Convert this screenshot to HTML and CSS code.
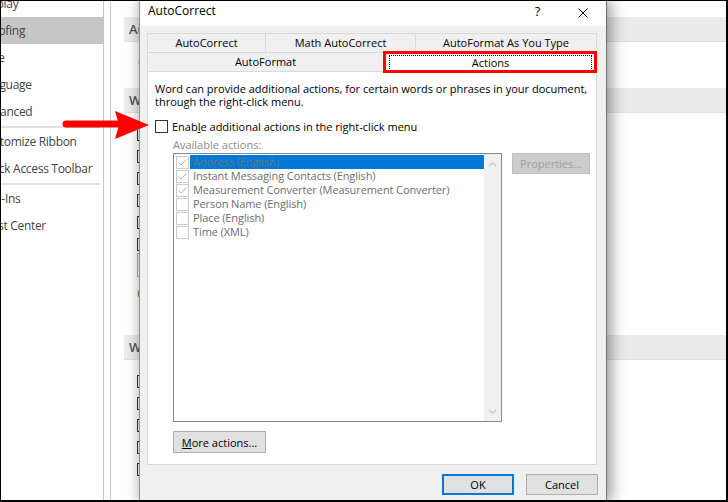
FILE: index.html
```html
<!DOCTYPE html>
<html lang="en">
<head>
<meta charset="utf-8">
<title>AutoCorrect - Actions</title>
<link rel="stylesheet" href="styles.css">
</head>
<body>
<div class="screen">
  <div class="options">
    <nav class="nav">
      <div class="nav-item first">Display</div>
      <div class="nav-item selected">Proofing</div>
      <div class="nav-item">Save</div>
      <div class="nav-item">Language</div>
      <div class="nav-item">Advanced</div>
      <div class="nav-sep"></div>
      <div class="nav-item">Customize Ribbon</div>
      <div class="nav-item">Quick Access Toolbar</div>
      <div class="nav-sep"></div>
      <div class="nav-item">Add-Ins</div>
      <div class="nav-item">Trust Center</div>
    </nav>
    <div class="gutter"></div>
    <main class="content">
      <div class="sec-head">AutoCorrect options</div>
      <div class="sec-text">Change how Word corrects and formats text as you type:</div>
      <div class="sec-head">When correcting spelling in Microsoft Office programs</div>
      <div class="bg-checks">
        <div class="bg-check"></div>
        <div class="bg-check"></div>
        <div class="bg-check"></div>
        <div class="bg-check"></div>
        <div class="bg-check"></div>
        <div class="bg-check"></div>
      </div>
      <div class="bg-select"></div>
      <div class="sec-link">Custom Dictionaries...</div>
      <div class="sec-head third">When correcting spelling and grammar in Word</div>
      <div class="bg-checks">
        <div class="bg-check"></div>
        <div class="bg-check"></div>
        <div class="bg-check"></div>
        <div class="bg-check"></div>
        <div class="bg-check"></div>
      </div>
    </main>
  </div>

  <section class="dialog">
    <header class="titlebar">
      <span class="title">AutoCorrect</span>
      <span class="cap-btn help">?</span>
      <span class="cap-btn close">
        <svg width="10" height="10" viewBox="0 0 10 10"><path d="M0.5 0.5 L9.5 9.5 M9.5 0.5 L0.5 9.5" stroke="#000" stroke-width="1" fill="none"/></svg>
      </span>
    </header>
    <div class="dlg-body">
      <div class="tabrow row1">
        <div class="tab">AutoCorrect</div>
        <div class="tab">Math AutoCorrect</div>
        <div class="tab">AutoFormat As You Type</div>
      </div>
      <div class="tabrow row2">
        <div class="tab">AutoFormat</div>
        <div class="tab active"><span class="focus">Actions</span><span class="redbox"></span></div>
      </div>
      <div class="panel">
        <p class="desc">Word can provide additional actions, for certain words or phrases in your document,<br>through the right-click menu.</p>
        <label class="enable"><span class="cb"></span><span class="enable-text">Enab<u>l</u>e additional actions in the right-click menu</span></label>
        <div class="avail">Available actions:</div>
        <div class="list-row">
          <div class="listbox">
            <div class="items">
              <div class="item"><span class="lcb checked"><svg width="11" height="11" viewBox="0 0 11 11"><path d="M1.5 5.5 L4 8 L9.5 2.5" stroke="#b0b0b0" stroke-width="1" fill="none"/></svg></span><span class="ltext sel">Address (English)</span></div>
              <div class="item"><span class="lcb checked"><svg width="11" height="11" viewBox="0 0 11 11"><path d="M1.5 5.5 L4 8 L9.5 2.5" stroke="#b0b0b0" stroke-width="1" fill="none"/></svg></span><span class="ltext">Instant Messaging Contacts (English)</span></div>
              <div class="item"><span class="lcb checked"><svg width="11" height="11" viewBox="0 0 11 11"><path d="M1.5 5.5 L4 8 L9.5 2.5" stroke="#b0b0b0" stroke-width="1" fill="none"/></svg></span><span class="ltext">Measurement Converter (Measurement Converter)</span></div>
              <div class="item"><span class="lcb"></span><span class="ltext">Person Name (English)</span></div>
              <div class="item"><span class="lcb"></span><span class="ltext">Place (English)</span></div>
              <div class="item"><span class="lcb"></span><span class="ltext">Time (XML)</span></div>
            </div>
            <div class="scrollbar">
              <svg width="9" height="6" viewBox="0 0 9 6"><path d="M1 5 L4.5 1.5 L8 5" stroke="#c4c4c4" stroke-width="1.2" fill="none"/></svg>
              <svg width="9" height="6" viewBox="0 0 9 6"><path d="M1 1 L4.5 4.5 L8 1" stroke="#c4c4c4" stroke-width="1.2" fill="none"/></svg>
            </div>
          </div>
          <div class="btn disabled">Properties...</div>
        </div>
        <div class="btn more"><span><u>M</u>ore actions...</span></div>
      </div>
      <footer class="dlg-footer">
        <div class="btn default">OK</div>
        <div class="btn">Cancel</div>
      </footer>
    </div>
  </section>

  <svg class="arrow" width="100" height="40" viewBox="0 0 100 40">
    <line x1="8" y1="16" x2="62" y2="16" stroke="#ff0000" stroke-width="7" stroke-linecap="round"/>
    <polygon points="57,3 91,17 57,31 61,17" fill="#ff0000"/>
  </svg>
</div>
</body>
</html>
```

FILE: styles.css
```css
* { box-sizing: border-box; }
html, body { margin: 0; padding: 0; }
body {
  width: 728px;
  height: 502px;
  overflow: hidden;
  background: #fff;
  font-family: "Open Sans", "Noto Sans", sans-serif;
}
.screen {
  position: relative;
  width: 728px;
  height: 502px;
  overflow: hidden;
  background: #fff;
}
.screen::after {
  content: "";
  position: absolute;
  inset: 0;
  border-style: solid;
  border-color: #000;
  border-width: 1px 2px 2px 1px;
  z-index: 20;
  pointer-events: none;
}

/* ---------- Word Options background ---------- */
.options { display: flex; height: 100%; }
.nav {
  width: 103px;
  flex: none;
  overflow: hidden;
  color: #444;
  font-size: 12px;
  letter-spacing: -0.3px;
}
.nav-item {
  height: 27px;
  line-height: 27px;
  white-space: nowrap;
  text-indent: -20px;
}
.nav-item.first { margin-top: -10px; }
.nav-item.selected { background: #c6c6c6; }
.nav-sep {
  height: 2px;
  margin: 1px 3px 0 0;
  background: #e1e1e1;
}
.gutter {
  width: 8px;
  flex: none;
  border-left: 1px solid #c4c4c4;
  border-right: 1px solid #c4c4c4;
}
.content {
  flex: 1;
  padding: 17px 0 0 13px;
  color: #444;
  font-size: 12px;
}
.sec-head {
  height: 25px;
  line-height: 25px;
  padding-left: 5px;
  background: #ebebeb;
  border-bottom: 1px solid #e0e0e0;
  font-weight: 600;
  font-size: 13px;
  color: #555;
  white-space: nowrap;
  overflow: hidden;
}
.sec-text {
  height: 46px;
  padding: 12px 0 0 14px;
  white-space: nowrap;
}
.bg-checks {
  display: flex;
  flex-direction: column;
  gap: 9px;
  padding: 15px 0 0 13px;
}
.bg-check {
  width: 13px;
  height: 13px;
  border: 1px solid #333;
  background: #fff;
}
.bg-select {
  margin: 2px 0 0 13px;
  width: 160px;
  height: 24px;
  border: 1px solid #ababab;
}
.sec-link {
  height: 58px;
  padding: 8px 0 0 13px;
  color: #9e5a16;
}

/* ---------- Dialog ---------- */
.dialog {
  position: absolute;
  left: 139px;
  top: 0;
  width: 468px;
  height: 502px;
  background: #f0f0f0;
  border-left: 1px solid #8f8f8f;
  border-right: 1px solid #707070;
  box-shadow: 5px 0 14px rgba(0,0,0,0.36), -3px 0 10px rgba(0,0,0,0.12);
  z-index: 5;
  display: flex;
  flex-direction: column;
  font-size: 11px;
  color: #000;
}
.titlebar {
  height: 26px;
  background: #fff;
  display: flex;
  align-items: flex-start;
  flex: none;
}
.title {
  padding: 3px 0 0 8px;
  line-height: 16px;
  font-size: 12px;
  flex: 1;
}
.cap-btn {
  width: 45px;
  height: 26px;
  display: flex;
  justify-content: center;
  padding-top: 2px;
  font-size: 13px;
  line-height: 18px;
}
.cap-btn.close { padding-top: 8px; margin-right: 1px; }

.dlg-body {
  flex: 1;
  display: flex;
  flex-direction: column;
  padding: 7px 9px 0 7px;
}
.tabrow { display: grid; }
.row1 { grid-template-columns: 118px 150px 1fr; }
.row2 { grid-template-columns: 236px 1fr; }
.tab {
  height: 19px;
  line-height: 18px;
  text-align: center;
  border-top: 1px solid #d9d9d9;
  border-left: 1px solid #d9d9d9;
  white-space: nowrap;
}
.tab:last-child { border-right: 1px solid #d9d9d9; }
.tab.active {
  position: relative;
  background: #fff;
  padding: 2px 4px 0 5px;
  line-height: 14px;
}
.focus {
  display: block;
  height: 16px;
  border: 1px dotted #000;
}
.redbox {
  position: absolute;
  left: -1px;
  right: -1px;
  top: -2px;
  bottom: -2px;
  border: 3px solid #ff0000;
}

.panel {
  height: 394px;
  flex: none;
  background: #fff;
  border: 1px solid #d9d9d9;
  padding: 10px 7px 0 7px;
  display: flex;
  flex-direction: column;
  align-items: flex-start;
}
.desc {
  margin: 0;
  line-height: 13px;
  white-space: nowrap;
}
.enable {
  display: flex;
  align-items: center;
  gap: 4px;
  height: 14px;
  margin-top: 11px;
  white-space: nowrap;
}
.cb {
  width: 13px;
  height: 13px;
  border: 1px solid #333;
  background: #fff;
}
.avail {
  margin: 5px 0 0 18px;
  line-height: 13px;
  color: #8a8a8a;
}
.list-row {
  display: flex;
  gap: 10px;
  align-items: flex-start;
  margin: 2px 0 0 18px;
}
.listbox {
  width: 329px;
  height: 269px;
  border: 1px solid #828790;
  display: flex;
}
.items {
  flex: 1;
  padding: 1px 0 0 2px;
}
.item {
  display: flex;
  height: 14px;
  align-items: center;
}
.lcb {
  width: 13px;
  height: 13px;
  border: 1px solid #cacaca;
  flex: none;
  display: flex;
  align-items: center;
  justify-content: center;
}
.ltext {
  flex: 1;
  height: 14px;
  margin-left: 1px;
  padding-left: 3px;
  line-height: 14px;
  color: #6d6d6d;
  white-space: nowrap;
  letter-spacing: -0.1px;
}
.ltext.sel { background: #0078d7; color: #6a7584; }
.scrollbar {
  width: 17px;
  background: #f0f0f0;
  display: flex;
  flex-direction: column;
  justify-content: space-between;
  align-items: center;
  padding: 7px 0 6px 0;
}
.btn {
  height: 21px;
  width: 72px;
  display: flex;
  align-items: center;
  justify-content: center;
  background: #e1e1e1;
  border: 1px solid #adadad;
  white-space: nowrap;
}
.btn.disabled {
  width: 78px;
  background: #cccccc;
  border-color: #bfbfbf;
  color: #9d9d9d;
}
.btn.more {
  width: 93px;
  height: 22px;
  margin: 9px 0 0 18px;
}
.dlg-footer {
  display: flex;
  justify-content: flex-end;
  gap: 12px;
  padding-top: 9px;
  margin-right: -1px;
}
.btn.default {
  border: 2px solid #0078d7;
}

/* ---------- Annotation arrow ---------- */
.arrow {
  position: absolute;
  left: 58px;
  top: 108px;
  z-index: 10;
}
```
